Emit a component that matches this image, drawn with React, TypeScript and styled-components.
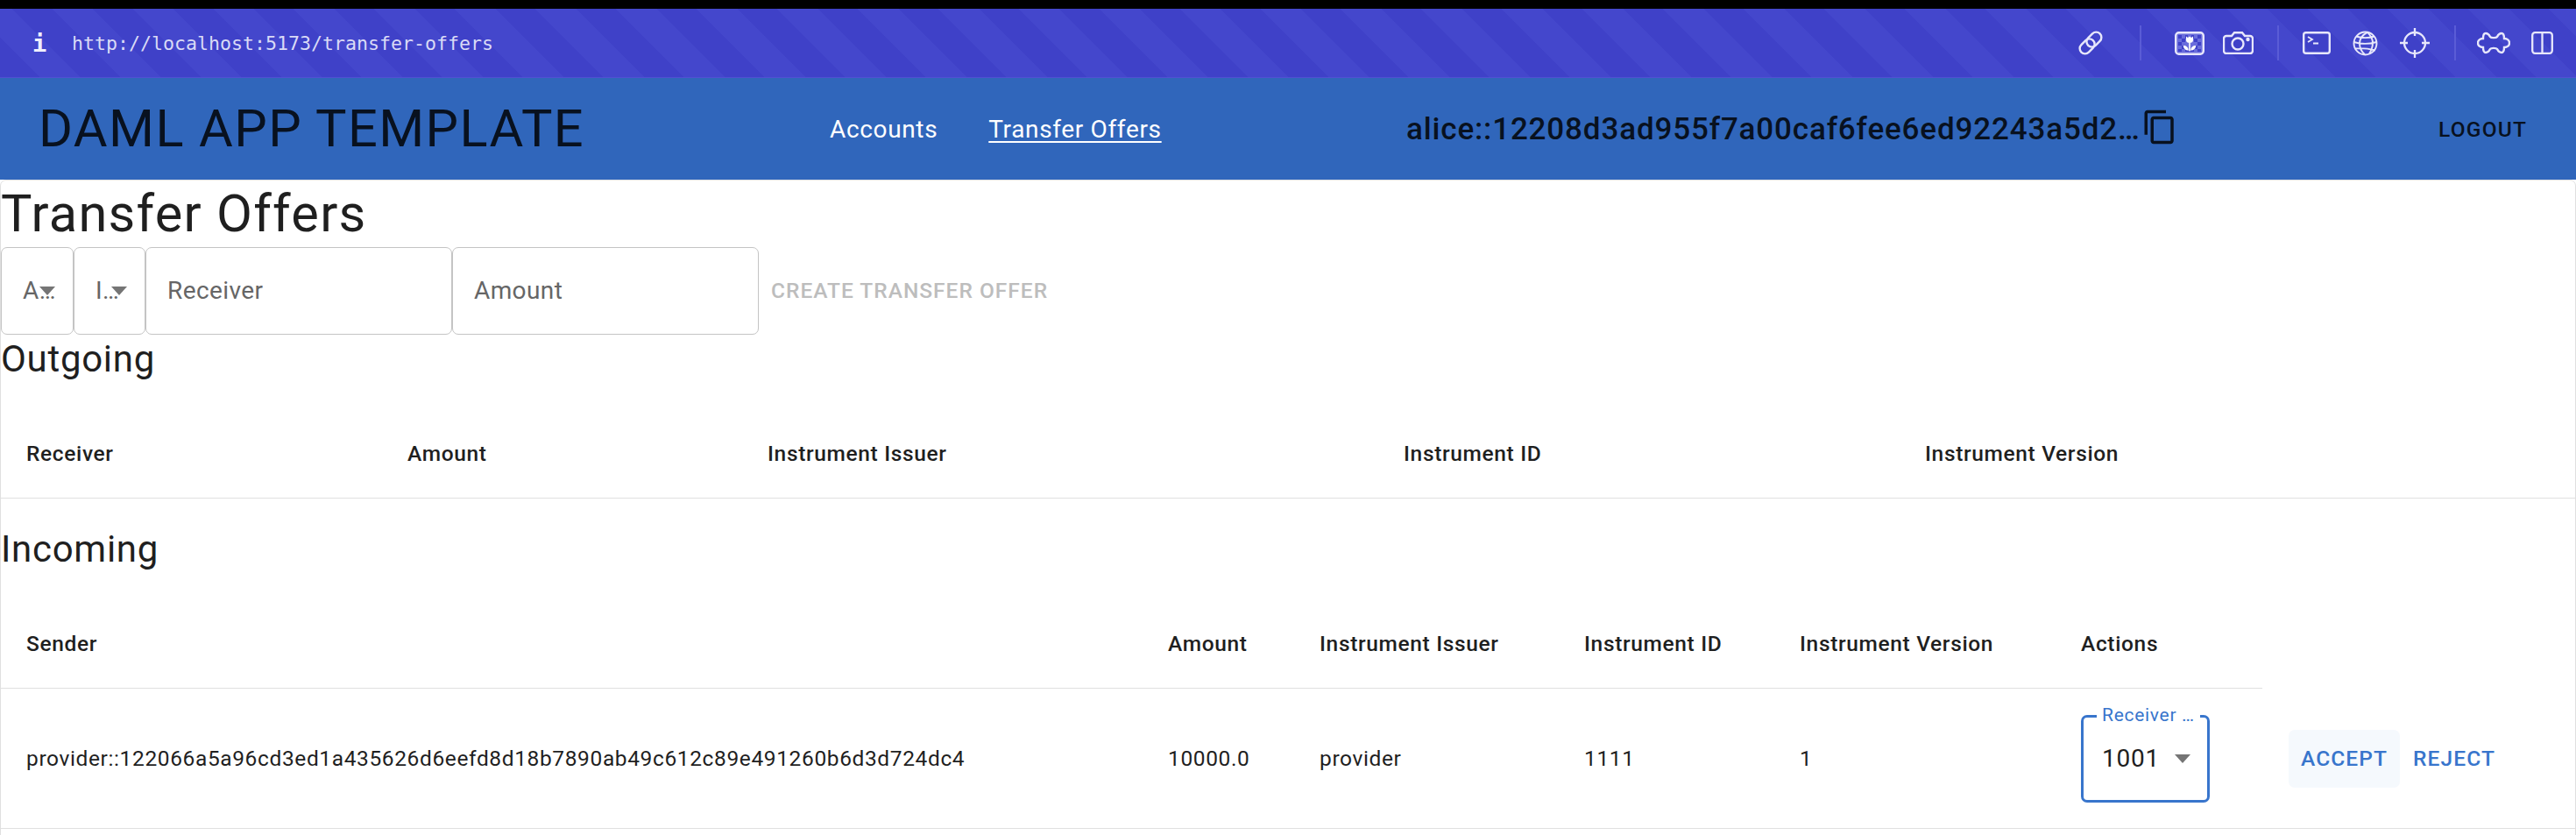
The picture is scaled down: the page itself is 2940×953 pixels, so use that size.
import styled, { createGlobalStyle } from "styled-components";

const GlobalStyle = createGlobalStyle`
  html, body {
    margin: 0;
    height: 953px;
    overflow: hidden;
    background: #fff;
    font-family: Roboto, "Liberation Sans", sans-serif;
    color: #1f1f1f;
  }
`;

const Page = styled.div`
  width: 2940px;
  height: 953px;
  overflow: hidden;
`;
const BlackBar = styled.div`
  height: 10px;
  background: #000;
`;
const BrowserBar = styled.div`
  height: 79px;
  box-sizing: border-box;
  display: flex;
  align-items: center;
  padding: 0 26px 0 37px;
  color: #e7e7fb;
  border-bottom: 1px solid #5150d2;
  background: repeating-linear-gradient(
    45deg,
    #3f41c8 0,
    #3f41c8 32px,
    #4447cc 32px,
    #4447cc 65px
  );
`;
const InfoMark = styled.span`
  width: 45px;
  font: bold 27px "DejaVu Sans Mono", monospace;
  color: #f0f0fd;
`;
const Url = styled.span`
  flex: 1;
  font: 21.6px "DejaVu Sans Mono", monospace;
  color: #d9daf6;
`;
const IconSlot = styled.span<{ $gap: number }>`
  display: flex;
  margin-left: ${(p) => p.$gap}px;
`;
const Divider = styled.span<{ $gap: number }>`
  width: 2px;
  height: 40px;
  background: #5a5cd6;
  margin-left: ${(p) => p.$gap}px;
`;

const AppHeader = styled.header`
  height: 116px;
  display: flex;
  align-items: center;
  background: #3066bb;
  color: #08111f;
`;
const Brand = styled.h1`
  margin: 0 0 0 44px;
  width: 903px;
  font-size: 59.5px;
  font-weight: 400;
  letter-spacing: 1.4px;
  white-space: nowrap;
`;
const Nav = styled.nav`
  width: 658px;
  display: flex;
  gap: 58px;
`;
const NavLink = styled.a<{ $active?: boolean }>`
  font-size: 28px;
  letter-spacing: 0.65px;
  color: #fff;
  text-decoration: ${(p) => (p.$active ? "underline" : "none")};
  text-underline-offset: 4px;
`;
const UserId = styled.div`
  width: 838px;
  font-size: 35px;
  font-weight: 500;
  letter-spacing: 0.85px;
  white-space: nowrap;
`;
const CopyIcon = styled.svg`
  width: 42px;
  height: 42px;
  margin: -4px 0 0 1px;
  fill: currentColor;
`;
const Logout = styled.span`
  margin-left: 297px;
  font-size: 24.5px;
  font-weight: 500;
  letter-spacing: 1.2px;
`;

const Main = styled.main`
  height: 760px;
  box-sizing: border-box;
  border: 1.75px solid #e0e0e0;
  border-radius: 7px;
`;
const PageTitle = styled.h2`
  margin: 0;
  height: 75px;
  font-size: 59.5px;
  line-height: 77px;
  font-weight: 400;
  letter-spacing: 1.25px;
`;
const FormRow = styled.div`
  display: flex;
  align-items: center;
  height: 101px;
`;
const Field = styled.div<{ $width: number }>`
  position: relative;
  width: ${(p) => p.$width}px;
  height: 100px;
  box-sizing: border-box;
  display: flex;
  align-items: center;
  padding-left: 24px;
  border: 1.75px solid #c4c4c4;
  border-radius: 7px;
  font-size: 28px;
  letter-spacing: 0.4px;
  color: #666;
`;
const FormArrow = styled.svg`
  position: absolute;
  right: 20px;
  top: 44px;
  width: 18px;
  height: 10px;
  fill: #757575;
`;
const CreateButton = styled.span`
  margin-left: 14px;
  font-size: 24.5px;
  font-weight: 500;
  letter-spacing: 1px;
  color: #bdbdbd;
`;
const SectionTitle = styled.h3<{ $top: number }>`
  margin: ${(p) => p.$top}px 0 0;
  height: 56px;
  font-size: 42px;
  line-height: 56px;
  font-weight: 400;
  letter-spacing: 0.7px;
`;
const TableRow = styled.div<{ $columns: string; $height: number; $width?: number }>`
  display: grid;
  grid-template-columns: ${(p) => p.$columns};
  align-items: center;
  height: ${(p) => p.$height}px;
  width: ${(p) => (p.$width ? `${p.$width}px` : "auto")};
  box-sizing: border-box;
  border-bottom: 1.75px solid #e0e0e0;
`;
const HeadCell = styled.div`
  padding: 28px 0 0 29px;
  font-size: 24.5px;
  font-weight: 470;
  letter-spacing: 0.65px;
  color: #1f1f1f;
`;
const Cell = styled.div`
  padding-left: 29px;
  font-size: 24.5px;
  letter-spacing: 0.62px;
  color: #1f1f1f;
  white-space: nowrap;
`;
const ActionsCell = styled(Cell)`
  display: flex;
  align-items: center;
`;
const ReceiverSelect = styled.div`
  position: relative;
  width: 147px;
  height: 100px;
  box-sizing: border-box;
  display: flex;
  align-items: center;
  padding: 0 0 0 21px;
  border: 3.5px solid #3875cc;
  border-radius: 7px;
  font-size: 28px;
  letter-spacing: 0.8px;
  color: #1f1f1f;
`;
const NotchLabel = styled.span`
  position: absolute;
  left: 15px;
  top: -15px;
  padding: 0 6px;
  background: #fff;
  font-size: 21px;
  line-height: 24px;
  letter-spacing: 0.7px;
  color: #3875cc;
`;
const SelectArrow = styled.svg`
  width: 18px;
  height: 10px;
  margin-left: 17px;
  fill: #757575;
`;
const ActionButton = styled.span<{ $hover?: boolean; $gap: number }>`
  height: 66px;
  display: flex;
  align-items: center;
  margin-left: ${(p) => p.$gap}px;
  padding: 0 14px;
  border-radius: 7px;
  background: ${(p) => (p.$hover ? "#f5f9fd" : "transparent")};
  font-size: 24.5px;
  font-weight: 500;
  letter-spacing: 1.1px;
  color: #3875cc;
`;

const LinkIcon = () => (
  <svg width="32" height="32" viewBox="0 0 32 32" fill="none" stroke="currentColor" strokeWidth="2.4">
    <g transform="rotate(-45 16 16)">
      <rect x="1" y="10" width="19" height="12" rx="6" />
      <rect x="12" y="10" width="19" height="12" rx="6" />
    </g>
  </svg>
);
const TulipIcon = () => (
  <svg width="34" height="27" viewBox="0 0 34 27">
    <rect x="1.2" y="1.2" width="31.6" height="24.6" rx="3.5" fill="#6a6ddc" stroke="currentColor" strokeWidth="2.4" />
    <path
      d="M4 4h4v4H4zM12 4h3v4h-3zM19 4h3v4h-3zM26 4h4v4h-4zM8 8h4v4H8zM22 8h4v4h-4zM4 12h4v4H4zM26 12h4v4h-4zM8 16h4v4H8zM22 16h4v4h-4zM4 20h4v3H4zM12 20h4v3h-4zM18 20h4v3h-4zM26 20h4v3h-4z"
      fill="#3f41c8"
    />
    <path d="M13 5.500l2 1.500 2-1.500 2 1.500 2-1.500v4.500c0 1.800-1.700 3-4 3s-4-1.200-4-3z" fill="#fff" />
    <path d="M16.200 13h1.600v9h-1.600z" fill="#fff" />
    <path d="M15.800 21.500c-3.300 0-6-2-6-5.500 3.300 0 6 2 6 5.500zM18.200 21.500c3.300 0 6-2 6-5.500-3.300 0-6 2-6 5.500z" fill="#fff" />
  </svg>
);
const CameraIcon = () => (
  <svg width="35" height="26" viewBox="0 0 35 26" fill="none" stroke="currentColor" strokeWidth="2.4">
    <path d="M4 5h6l3-3.800h9l3 3.800h6a3 3 0 0 1 3 3v14a3 3 0 0 1-3 3H4a3 3 0 0 1-3-3V8a3 3 0 0 1 3-3z" />
    <circle cx="17" cy="14" r="6.500" />
    <circle cx="28.500" cy="9" r="1" fill="currentColor" />
  </svg>
);
const TerminalIcon = () => (
  <svg width="32" height="26" viewBox="0 0 32 26" fill="none" stroke="currentColor" strokeWidth="2.4">
    <rect x="1.200" y="1.200" width="29.600" height="23.600" rx="2.500" />
    <path d="M6 6l5 3-5 3M12 13.500h6" strokeWidth="1.800" />
  </svg>
);
const GlobeIcon = () => (
  <svg width="29" height="29" viewBox="0 0 29 29" fill="none" stroke="currentColor" strokeWidth="1.900">
    <circle cx="14.500" cy="14.500" r="13" />
    <path d="M17 1.800c-6 3-9 8-9 13s2 9 6 12.400M17 1.800c4 4 6 8 6 12s-1 8-4 12.500M4 6.500c6 2 15 2 21 0M1.600 13c8 2.500 17 2.500 25.800 0M3 20.500c8-1 15 0 23 2" />
  </svg>
);
const CrosshairIcon = () => (
  <svg width="34" height="34" viewBox="0 0 34 34" fill="none" stroke="currentColor" strokeWidth="2.300">
    <circle cx="17" cy="17" r="12" />
    <path d="M17 0v9M17 25v9M0 17h9M25 17h9" />
  </svg>
);
const PuzzleIcon = () => (
  <svg width="38" height="26" viewBox="0 0 38 26" fill="none" stroke="currentColor" strokeWidth="2.400">
    <path d="M10 2C13 2 14 4 15 6C16 7.500 22 7.500 23 6C24 4 25 2 28 2C31 2 31 6 31 8C33 8 37 9 37 13C37 17 33 18 31 18C31 20 31 24 28 24C25 24 24 22 23 20C22 18.500 16 18.500 15 20C14 22 13 24 10 24C7 24 7 20 7 18C5 18 1 17 1 13C1 9 5 8 7 8C7 6 7 2 10 2Z" />
  </svg>
);
const SplitIcon = () => (
  <svg width="25" height="26" viewBox="0 0 25 26" fill="none" stroke="currentColor" strokeWidth="2.300">
    <rect x="1.200" y="1.200" width="22.600" height="23.600" rx="3" />
    <path d="M12.500 1v24" />
  </svg>
);
const DropArrow = () => <path d="M0 0h18L9 10z" />;

const OUTGOING = "435px 411px 726px 595px 1fr";
const INCOMING = "1303px 173px 302px 246px 321px 238px";
const INCOMING_BODY = "1303px 173px 302px 246px 321px 1fr";

const App = () => {
  return (
    <Page>
      <GlobalStyle />
      <BlackBar />
      <BrowserBar>
        <InfoMark>i</InfoMark>
        <Url>http://localhost:5173/transfer-offers</Url>
        <IconSlot $gap={0}>
          <LinkIcon />
        </IconSlot>
        <Divider $gap={40} />
        <IconSlot $gap={38}>
          <TulipIcon />
        </IconSlot>
        <IconSlot $gap={21}>
          <CameraIcon />
        </IconSlot>
        <Divider $gap={27} />
        <IconSlot $gap={27}>
          <TerminalIcon />
        </IconSlot>
        <IconSlot $gap={25}>
          <GlobeIcon />
        </IconSlot>
        <IconSlot $gap={25}>
          <CrosshairIcon />
        </IconSlot>
        <Divider $gap={28} />
        <IconSlot $gap={24}>
          <PuzzleIcon />
        </IconSlot>
        <IconSlot $gap={24}>
          <SplitIcon />
        </IconSlot>
      </BrowserBar>
      <AppHeader>
        <Brand>DAML APP TEMPLATE</Brand>
        <Nav>
          <NavLink>Accounts</NavLink>
          <NavLink $active>Transfer Offers</NavLink>
        </Nav>
        <UserId>alice::12208d3ad955f7a00caf6fee6ed92243a5d2…</UserId>
        <CopyIcon viewBox="0 0 24 24">
          <path d="M16 1H4c-1.100 0-2 .9-2 2v14h2V3h12V1zm3 4H8c-1.100 0-2 .9-2 2v14c0 1.100.9 2 2 2h11c1.100 0 2-.9 2-2V7c0-1.100-.9-2-2-2zm0 16H8V7h11v14z" />
        </CopyIcon>
        <Logout>LOGOUT</Logout>
      </AppHeader>
      <Main>
        <PageTitle>Transfer Offers</PageTitle>
        <FormRow>
          <Field $width={83}>
            A…
            <FormArrow viewBox="0 0 18 10">
              <DropArrow />
            </FormArrow>
          </Field>
          <Field $width={82}>
            I…
            <FormArrow viewBox="0 0 18 10">
              <DropArrow />
            </FormArrow>
          </Field>
          <Field $width={350}>Receiver</Field>
          <Field $width={350}>Amount</Field>
          <CreateButton>CREATE TRANSFER OFFER</CreateButton>
        </FormRow>
        <SectionTitle $top={0}>Outgoing</SectionTitle>
        <TableRow $columns={OUTGOING} $height={131}>
          <HeadCell>Receiver</HeadCell>
          <HeadCell>Amount</HeadCell>
          <HeadCell>Instrument Issuer</HeadCell>
          <HeadCell>Instrument ID</HeadCell>
          <HeadCell>Instrument Version</HeadCell>
        </TableRow>
        <SectionTitle $top={30}>Incoming</SectionTitle>
        <TableRow $columns={INCOMING} $height={131} $width={2581}>
          <HeadCell>Sender</HeadCell>
          <HeadCell>Amount</HeadCell>
          <HeadCell>Instrument Issuer</HeadCell>
          <HeadCell>Instrument ID</HeadCell>
          <HeadCell>Instrument Version</HeadCell>
          <HeadCell>Actions</HeadCell>
        </TableRow>
        <TableRow $columns={INCOMING_BODY} $height={160}>
          <Cell>provider::122066a5a96cd3ed1a435626d6eefd8d18b7890ab49c612c89e491260b6d3d724dc4</Cell>
          <Cell>10000.0</Cell>
          <Cell>provider</Cell>
          <Cell>1111</Cell>
          <Cell>1</Cell>
          <ActionsCell>
            <ReceiverSelect>
              <NotchLabel>Receiver …</NotchLabel>
              1001
              <SelectArrow viewBox="0 0 18 10">
                <DropArrow />
              </SelectArrow>
            </ReceiverSelect>
            <ActionButton $hover $gap={90}>
              ACCEPT
            </ActionButton>
            <ActionButton $gap={1}>REJECT</ActionButton>
          </ActionsCell>
        </TableRow>
      </Main>
    </Page>
  );
};

export default App;
